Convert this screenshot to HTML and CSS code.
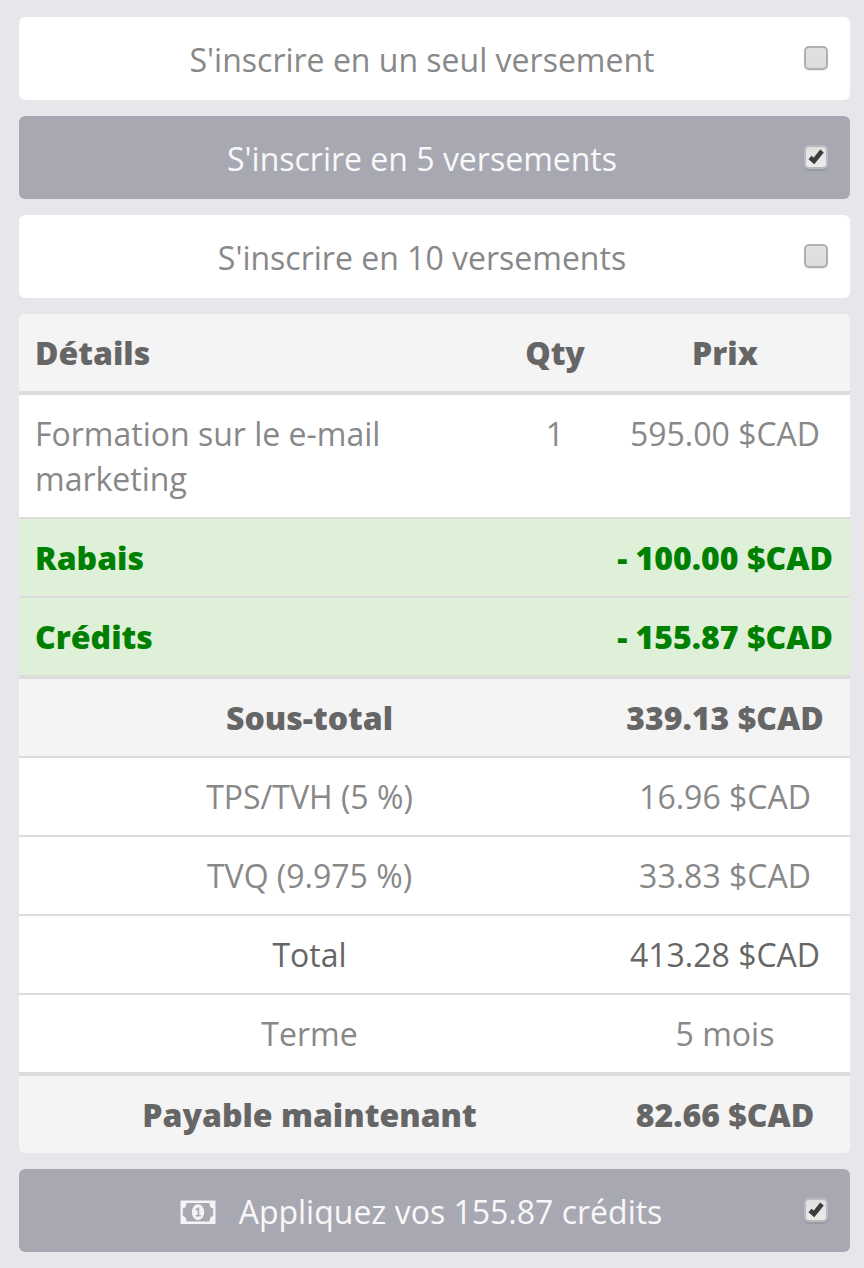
FILE: index.html
```html
<!DOCTYPE html>
<html lang="fr">
<head>
    <meta charset="UTF-8">
    <title>Inscription</title>
    <link rel="stylesheet" href="styles.css">
</head>
<body>
    <div class="option">
        <span class="option-label">S'inscrire en un seul versement</span>
        <span class="check"></span>
    </div>
    <div class="option selected">
        <span class="option-label">S'inscrire en 5 versements</span>
        <span class="check checked">
            <svg viewBox="0 0 18 18" width="18" height="18"><path d="M3 9.5 L7 13 L15 3"/></svg>
        </span>
    </div>
    <div class="option">
        <span class="option-label">S'inscrire en 10 versements</span>
        <span class="check"></span>
    </div>

    <table class="details">
        <thead>
            <tr>
                <th class="col-name left">Détails</th>
                <th class="col-qty">Qty</th>
                <th class="col-price">Prix</th>
            </tr>
        </thead>
        <tbody>
            <tr class="first">
                <td class="left">Formation sur le e-mail marketing</td>
                <td class="top">1</td>
                <td class="top">595.00 $CAD</td>
            </tr>
            <tr class="discount">
                <td class="left" colspan="2">Rabais</td>
                <td>- 100.00 $CAD</td>
            </tr>
            <tr class="discount">
                <td class="left" colspan="2">Crédits</td>
                <td>- 155.87 $CAD</td>
            </tr>
            <tr class="subtotal">
                <td colspan="2">Sous-total</td>
                <td>339.13 $CAD</td>
            </tr>
            <tr>
                <td colspan="2">TPS/TVH (5 %)</td>
                <td>16.96 $CAD</td>
            </tr>
            <tr>
                <td colspan="2">TVQ (9.975 %)</td>
                <td>33.83 $CAD</td>
            </tr>
            <tr class="total">
                <td colspan="2">Total</td>
                <td>413.28 $CAD</td>
            </tr>
            <tr>
                <td colspan="2">Terme</td>
                <td>5 mois</td>
            </tr>
            <tr class="subtotal">
                <td colspan="2">Payable maintenant</td>
                <td>82.66 $CAD</td>
            </tr>
        </tbody>
    </table>

    <div class="option selected last">
        <span class="option-label">
            <svg class="money" viewBox="0 0 36 24" width="36" height="24">
                <path fill-rule="evenodd" d="M0.5 0.5H35.5V24H0.5Z M6.5 3 Q6.5 8 2.8 8.5V16Q6.5 16.5 6.5 21.5H29.5Q29.5 16.5 33.2 16V8.5Q29.5 8 29.5 3Z"/>
                <ellipse cx="18" cy="12.2" rx="6.2" ry="8"/>
                <path class="money-digit" d="M15.8 10 L18.4 8.4 V15.8 M15.8 15.8 H20.8"/>
            </svg>
            Appliquez vos 155.87 crédits
        </span>
        <span class="check checked">
            <svg viewBox="0 0 18 18" width="18" height="18"><path d="M3 9.5 L7 13 L15 3"/></svg>
        </span>
    </div>
</body>
</html>
```

FILE: styles.css
```css
* {
    box-sizing: border-box;
}
html, body {
    margin: 0;
    height: 100%;
}
body {
    font-family: 'Open Sans', sans-serif;
    font-size: 32px;
    line-height: 45px;
    color: #888888;
    background-color: #e6e6eb;
    padding: 17px 14px 16px 19px;
}
.option {
    position: relative;
    display: flex;
    align-items: center;
    justify-content: center;
    height: 83px;
    margin-bottom: 16px;
    padding-top: 2px;
    padding-right: 25px;
    background-color: #fff;
    border-radius: 6px;
}
.option.selected {
    background-color: #a8a8b3;
    color: #f8f8f8;
}
.option.last {
    margin: 16px 0 0;
    padding-right: 27px;
}
.option-label {
    display: flex;
    align-items: center;
    gap: 23px;
}
.money {
    fill: #f4f4f6;
}
.money-digit {
    fill: none;
    stroke: #a8a8b3;
    stroke-width: 1.6;
}
.check {
    position: absolute;
    right: 22px;
    top: 29px;
    width: 24px;
    height: 24px;
    display: flex;
    align-items: center;
    justify-content: center;
    background: linear-gradient(#e2e2e2, #dcdcdc);
    border: 2px solid #b0b0b0;
    border-radius: 5px;
    box-shadow: 0 1px 1px rgba(0,0,0,0.1);
}
.check.checked {
    background: linear-gradient(#e0e0e0, #ebebeb);
    border-color: #b9b9c0;
    box-shadow: 0 2px 0 #989aa2;
}
.check svg {
    flex: none;
    overflow: visible;
    fill: none;
    stroke: #3c3c3c;
    stroke-width: 4.6;
}
.details {
    width: 831px;
    table-layout: fixed;
    border-collapse: separate;
    border-spacing: 0;
    background-color: #fff;
    border-radius: 6px;
    overflow: hidden;
}
.col-name {
    width: 491px;
}
.col-qty {
    width: 90px;
}
.col-price {
    width: 250px;
}
th, td {
    padding: 16px 0;
    text-align: center;
    font-weight: 400;
    border-top: 2px solid #dcdcdc;
}
th {
    font-weight: 800;
    color: #666666;
    background-color: #f4f4f4;
    border-top: 0;
    border-bottom: 4px solid #dcdcdc;
}
.left {
    text-align: left;
    padding-left: 16px;
    padding-right: 16px;
}
.top {
    vertical-align: top;
}
.first td {
    border-top: 0;
}
.discount td {
    font-weight: 800;
    color: #008000;
    background-color: #dff0d8;
}
.subtotal td {
    font-weight: 800;
    color: #666666;
    background-color: #f4f4f4;
    border-top-width: 4px;
}
.total td {
    color: #666666;
}
```
